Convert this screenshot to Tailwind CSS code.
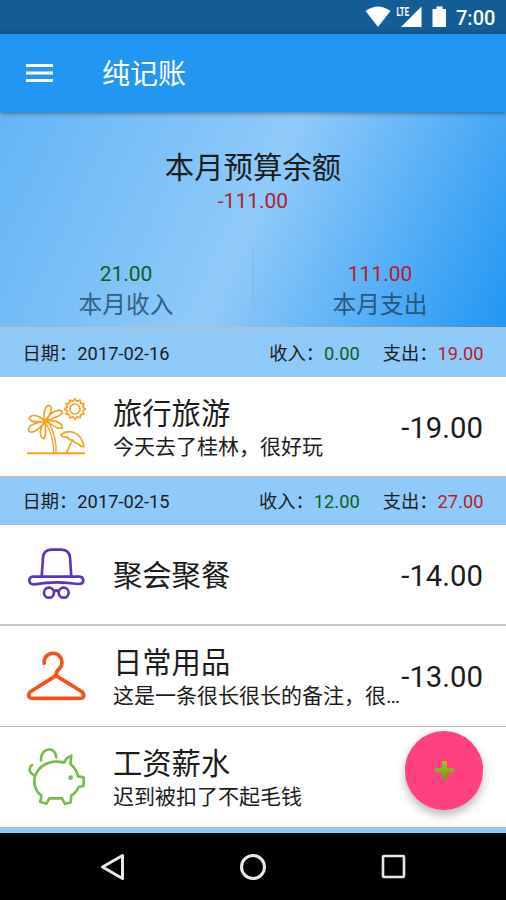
<!DOCTYPE html>
<html lang="zh-CN">
<head>
<meta charset="utf-8">
<title>纯记账</title>
<script src="https://cdn.jsdelivr.net/npm/@tailwindcss/browser@4"></script>
</head>
<body class="w-[506px] h-[900px] overflow-hidden bg-white text-[#1c1c1c] font-[Roboto,'Noto_Sans_CJK_SC',sans-serif]">
<div class="relative flex flex-col w-[506px] h-[900px] overflow-hidden">
  <!-- status bar -->
  <div class="h-[34px] shrink-0 bg-[#145c96] flex items-center justify-end pr-[11px] text-white">
    <svg class="w-[95px] h-[34px]" viewBox="0 0 95 34" fill="#fff">
      <path d="M4.500 11Q17 2 29.500 11L17 27Z"/>
      <path d="M60.500 6.500V27H40Z" />
      <path d="M34 4H49.500V14.500L47 18H34Z" fill="#145c96"/>
      <path d="M75.500 6.500V9H71.500V27H85V9H81.500V6.500Z"/>
      <text x="35.500" y="15.500" font-size="12" font-weight="700" font-family="Roboto" textLength="12.500" lengthAdjust="spacingAndGlyphs">LTE</text>
    </svg>
    <span class="w-[39px] text-[20px] leading-[34px] pt-px font-medium whitespace-nowrap">7:00</span>
  </div>
  <!-- app bar -->
  <div class="relative z-10 h-[78px] shrink-0 bg-[#2196f3] flex items-center pl-[26px] text-white shadow-[0_1px_5px_rgba(0,0,0,0.45)]">
    <svg class="w-[27px] h-[20px]" viewBox="0 0 27 20" fill="#fff"><path d="M0 1h27v3H0zM0 8.500h27v3H0zM0 16h27v3H0z"/></svg>
    <h1 class="ml-[49px] pt-[4px] text-[28px] leading-[40px] font-normal">纯记账</h1>
  </div>
  <!-- summary -->
  <div class="h-[215px] shrink-0 bg-[linear-gradient(115deg,#64b5f6_0%,#90caf9_50%,#2196f3_100%)] flex flex-col items-center pt-[36px]">
    <div class="text-[29.400px] leading-[40px]">本月预算余额</div>
    <div class="text-[21px] leading-[26px] text-[#b71c2c]">-111.00</div>
    <div class="mt-auto w-full h-[78px] flex text-center">
      <div class="flex-1 pt-[12px] border-r-2 border-[#8abde6]">
        <div class="text-[21px] leading-[26px] text-[#0b6020]">21.00</div>
        <div class="pt-px text-[23.700px] leading-[34px] text-[#345f84]">本月收入</div>
      </div>
      <div class="flex-1 pt-[12px]">
        <div class="text-[21px] leading-[26px] text-[#b71c2c]">111.00</div>
        <div class="pt-px text-[23.700px] leading-[34px] text-[#285880]">本月支出</div>
      </div>
    </div>
  </div>
  <!-- day group -->
  <div class="h-[50px] shrink-0 bg-[#90caf9] border-t-2 border-b border-[#b4c0ca] flex items-center px-[22.500px] pt-[3px] text-[18.300px] leading-[26px] whitespace-nowrap">
    <span>日期：2017-02-16</span>
    <span class="ml-auto">收入：<span class="text-[#0b6020]">0.00</span></span>
    <span class="ml-[23px]">支出：<span class="text-[#b71c2c]">19.00</span></span>
  </div>
  <div class="h-[100px] shrink-0 flex items-center pr-[23px] border-b border-[#c4c4c4]">
    <svg class="w-[100px] h-[100px] ml-[10px] mt-[6px] shrink-0" viewBox="0 0 300 300" fill="none" stroke="#fb9f1c" stroke-width="5" stroke-linejoin="round" stroke-linecap="round">
      <path d="M54 220H222" stroke-width="6"/>
      <path d="M106 126Q132 170 131 218M114 124Q141 170 138 218" stroke-width="4"/>
      <path d="M106 124C96 102 106 74 120 77C130 84 118 110 106 124C118 98 142 86 156 93C162 107 132 112 106 124C132 118 158 128 157 143C145 152 126 132 106 124M106 124C84 102 62 103 57 115C62 130 88 126 106 124C76 126 52 138 56 153C68 164 92 144 106 124C86 144 88 174 102 176C112 166 104 142 106 124" />
      <circle cx="195" cy="87" r="15"/>
      <path transform="translate(195 87)" d="M0-31L6-23L15.500-27L17-17L27-15.500L23-6L31 0L23 6L27 15.500L17 17L15.500 27L6 23L0 31L-6 23L-15.500 27L-17 17L-27 15.500L-23 6L-31 0L-23-6L-27-15.500L-17-17L-15.500-27L-6-23Z"/>
      <path d="M152 164C174 148 212 150 222 200Q211 202 204 190Q194 190 188 180Q177 182 171 170Q160 174 152 164ZM187 181L170 217"/>
    </svg>
    <div class="ml-[3px] pt-[3px] flex-1 min-w-0 whitespace-nowrap">
      <div class="text-[29.300px] leading-[38px]">旅行旅游</div>
      <div class="text-[21px] leading-[28px]">今天去了桂林，很好玩</div>
    </div>
    <div class="pt-[3px] text-[29.300px] leading-[40px]">-19.00</div>
  </div>
  <!-- day group -->
  <div class="h-[48px] shrink-0 bg-[#90caf9] border-y border-[#b4c0ca] flex items-center px-[22.500px] pt-[2px] text-[18.300px] leading-[26px] whitespace-nowrap">
    <span>日期：2017-02-15</span>
    <span class="ml-auto">收入：<span class="text-[#0b6020]">12.00</span></span>
    <span class="ml-[23px]">支出：<span class="text-[#b71c2c]">27.00</span></span>
  </div>
  <div class="h-[101px] shrink-0 flex items-center pr-[23px] border-b-2 border-[#c4c4c4]">
    <svg class="w-[100px] h-[100px] ml-[10px] mt-[11px] shrink-0" viewBox="0 0 300 300" fill="none" stroke="#5e35b1" stroke-width="8" stroke-linejoin="round" stroke-linecap="round">
      <path d="M95 140L99 83Q101 60 124 59H154Q178 60 180 83L184 140"/>
      <path d="M95 140H184H208Q220 141 220 152Q219 163 204 162Q138 152 74 163Q59 164 58 153Q57 141 70 140H95" />
      <circle cx="117" cy="188" r="15"/><circle cx="161" cy="188" r="15"/><path d="M133 184Q139 179 145 184"/>
    </svg>
    <div class="ml-[3px] pt-[3px] flex-1 min-w-0 whitespace-nowrap text-[29.300px] leading-[40px]">聚会聚餐</div>
    <div class="pt-[3px] text-[29.300px] leading-[40px]">-14.00</div>
  </div>
  <div class="h-[101px] shrink-0 flex items-center pr-[23px] border-b border-[#b8b8b8]">
    <svg class="w-[100px] h-[90px] ml-[10px] mt-[9px] shrink-0" viewBox="0 0 300 270" fill="none" stroke="#f4511e" stroke-width="11" stroke-linejoin="round">
      <path d="M103 86A27 27 0 1 1 148 98Q138 106 138 119"/>
      <path d="M138 119L217 168Q228 187 208 187H70Q48 187 60 168Z"/>
    </svg>
    <div class="ml-[3px] pt-[2px] flex-1 min-w-0 whitespace-nowrap">
      <div class="text-[29.300px] leading-[38px]">日常用品</div>
      <div class="text-[21px] leading-[28px]">这是一条很长很长的备注，很…</div>
    </div>
    <div class="pt-[2px] text-[29.300px] leading-[40px]">-13.00</div>
  </div>
  <div class="h-[100px] shrink-0 flex items-center pr-[23px]">
    <svg class="w-[100px] h-[100px] ml-[10px] mt-[16px] shrink-0" viewBox="0 0 300 300" fill="none" stroke="#7cb84e" stroke-width="8" stroke-linejoin="round" stroke-linecap="round">
      <path d="M162 83Q169 67 184 62L181 87Q200 102 204 124L221 127V153L206 156Q199 173 184 181L182 202L165 207L156 190H118L109 206L91 201L94 182C70 164 68 132 81 111C97 84 130 75 162 83Z"/>
      <path d="M93 76C92 34 138 34 139 67M66 90C54 99 59 119 74 120"/>
      <circle cx="182" cy="128" r="7" fill="#7cb84e" stroke="none"/>
    </svg>
    <div class="ml-[3px] pt-px flex-1 min-w-0 whitespace-nowrap">
      <div class="text-[29.300px] leading-[38px]">工资薪水</div>
      <div class="text-[21px] leading-[28px]">迟到被扣了不起毛钱</div>
    </div>
  </div>
  <div class="h-[6px] shrink-0 bg-[#90caf9] border-t border-[#b4c0ca]"></div>
  <!-- navigation bar -->
  <div class="flex-1 bg-black flex items-center justify-between px-[100px]">
    <svg class="w-[25px] h-[28px]" viewBox="0 0 25 28" fill="none" stroke="#e8e8e8" stroke-width="3" stroke-linejoin="round"><path d="M22.500 2.500V25.500L2.500 14Z"/></svg>
    <svg class="w-[28px] h-[28px]" viewBox="0 0 28 28" fill="none" stroke="#e8e8e8" stroke-width="3"><circle cx="14" cy="14" r="11.500"/></svg>
    <svg class="w-[25px] h-[28px]" viewBox="0 0 25 28" fill="none" stroke="#e8e8e8" stroke-width="2.600"><rect x="2" y="3" width="21" height="21" rx="1"/></svg>
  </div>
  <!-- floating action button -->
  <button class="absolute left-[405px] top-[731px] w-[78px] h-[79px] rounded-full bg-[#ff4081] shadow-[0_5px_10px_rgba(0,0,0,0.28)] flex items-center justify-center">
    <svg class="w-[19px] h-[19px]" viewBox="0 0 19 19">
      <defs><linearGradient id="plus" x1="0" y1="0" x2="0" y2="1"><stop offset="0" stop-color="#a4c817"/><stop offset="1" stop-color="#64a010"/></linearGradient></defs>
      <path fill="url(#plus)" d="M7.200 0h4.600v7.200H19v4.600h-7.200V19H7.200v-7.200H0V7.200h7.200z"/>
    </svg>
  </button>
</div>
</body>
</html>
